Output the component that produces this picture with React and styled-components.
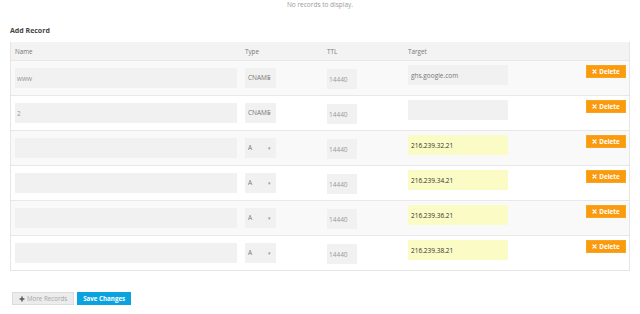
import React from 'react';
import styled, { createGlobalStyle } from 'styled-components';

const GlobalStyle = createGlobalStyle`
  html, body {
    margin: 0;
    padding: 0;
    background: #fff;
    font-family: "Open Sans", "Liberation Sans", sans-serif;
  }
`;

const Page = styled.div`
  width: 640px;
  height: 314px;
  padding: 0 10px;
  box-sizing: border-box;
  overflow: hidden;
`;

const Notice = styled.div`
  text-align: center;
  font-size: 6.5px;
  line-height: 10px;
  color: #9a9a9a;
`;

const Heading = styled.h4`
  margin: 16px 0 0;
  font-size: 7px;
  line-height: 10px;
  font-weight: 700;
  color: #444;
`;

const Table = styled.div`
  margin-top: 6px;
  border: 1px solid #e6e6e6;
  border-top: none;
`;

const cols = '230px 82px 81px 1fr auto';

const HeadRow = styled.div`
  display: grid;
  grid-template-columns: ${cols};
  height: 18px;
  align-items: center;
  background: #f3f3f3;
  padding: 0 3px 0 4px;
  font-size: 6.3px;
  color: #777;
`;

const Row = styled.div`
  display: grid;
  grid-template-columns: ${cols};
  align-items: start;
  height: 35px;
  box-sizing: border-box;
  border-top: 1px solid #e8e8e8;
  padding: 0 3px 0 4px;
  background: ${(p) => (p.$striped ? '#f9f9f9' : '#fff')};
`;

const Field = styled.input`
  box-sizing: border-box;
  border: none;
  outline: none;
  margin: ${(p) => p.$top}px 0 0;
  width: ${(p) => p.$w}px;
  height: 20px;
  padding: 0 ${(p) => p.$pad || 2}px;
  background: ${(p) => (p.$hl ? '#fbfbc6' : '#f1f1f1')};
  font-family: inherit;
  font-size: 6.5px;
  color: ${(p) => p.$color || '#888'};
`;

const Select = styled.div`
  position: relative;
  box-sizing: border-box;
  margin-top: 7px;
  width: 31px;
  height: 20px;
  padding-left: 3px;
  background: #f1f1f1;
  font-size: 6.5px;
  line-height: 20px;
  color: #777;
  white-space: nowrap;
  &::after {
    content: '▾';
    position: absolute;
    right: 5px;
    top: 0;
    font-size: 5px;
    color: #999;
  }
`;

const DeleteButton = styled.button`
  display: flex;
  align-items: center;
  justify-content: center;
  gap: 2px;
  margin-top: 4px;
  width: 40px;
  height: 13px;
  padding: 0;
  border: 1px solid #f5a623;
  background: #fb9a0c;
  color: #fff;
  font-family: inherit;
  font-weight: 700;
  font-size: 6.3px;
  cursor: pointer;
`;

const Actions = styled.div`
  display: flex;
  gap: 3px;
  margin: 21px 0 0 2px;
`;

const Button = styled.button`
  display: flex;
  align-items: center;
  gap: 2px;
  height: 13px;
  box-sizing: border-box;
  padding: 0 ${(p) => (p.$primary ? 5 : 6)}px;
  border: 1px solid ${(p) => (p.$primary ? '#0aa3df' : '#dcdcdc')};
  background: ${(p) => (p.$primary ? '#0aa3df' : '#ececec')};
  color: ${(p) => (p.$primary ? '#fff' : '#a6a6a6')};
  font-family: inherit;
  font-weight: ${(p) => (p.$primary ? 700 : 400)};
  font-size: 6.2px;
  white-space: nowrap;
  cursor: pointer;
`;

const Cross = () => (
  <svg width="5" height="5" viewBox="0 0 10 10">
    <path d="M2 2 L8 8 M8 2 L2 8" stroke="#fff" strokeWidth="2.6" strokeLinecap="round" />
  </svg>
);

const Plus = () => (
  <svg width="6" height="6" viewBox="0 0 10 10">
    <path d="M5 1 V9 M1 5 H9" stroke="#555" strokeWidth="2.4" />
  </svg>
);

const records = [
  { name: 'www', type: 'CNAME', ttl: '14440', target: 'ghs.google.com' },
  { name: '2', type: 'CNAME', ttl: '14440', target: '' },
  { name: '', type: 'A', ttl: '14440', target: '216.239.32.21', hl: true },
  { name: '', type: 'A', ttl: '14440', target: '216.239.34.21', hl: true },
  { name: '', type: 'A', ttl: '14440', target: '216.239.36.21', hl: true },
  { name: '', type: 'A', ttl: '14440', target: '216.239.38.21', hl: true },
];

export default function App() {
  return (
    <Page>
      <GlobalStyle />
      <Notice>No records to display.</Notice>
      <Heading>Add Record</Heading>
      <Table>
        <HeadRow>
          <span>Name</span>
          <span>Type</span>
          <span>TTL</span>
          <span>Target</span>
          <span />
        </HeadRow>
        {records.map((r, i) => (
          <Row key={i} $striped={i % 2 === 0}>
            <Field $top={7} $w={222} defaultValue={r.name} $color="#999" readOnly />
            <Select>{r.type}</Select>
            <Field $top={8} $w={30} defaultValue={r.ttl} $color="#999" readOnly />
            <Field
              $top={4}
              $w={100}
              $pad={3}
              $hl={r.hl}
              $color={r.hl ? '#333' : '#777'}
              defaultValue={r.target}
              readOnly
            />
            <DeleteButton>
              <Cross />
              Delete
            </DeleteButton>
          </Row>
        ))}
      </Table>
      <Actions>
        <Button>
          <Plus />
          More Records
        </Button>
        <Button $primary>Save Changes</Button>
      </Actions>
    </Page>
  );
}
